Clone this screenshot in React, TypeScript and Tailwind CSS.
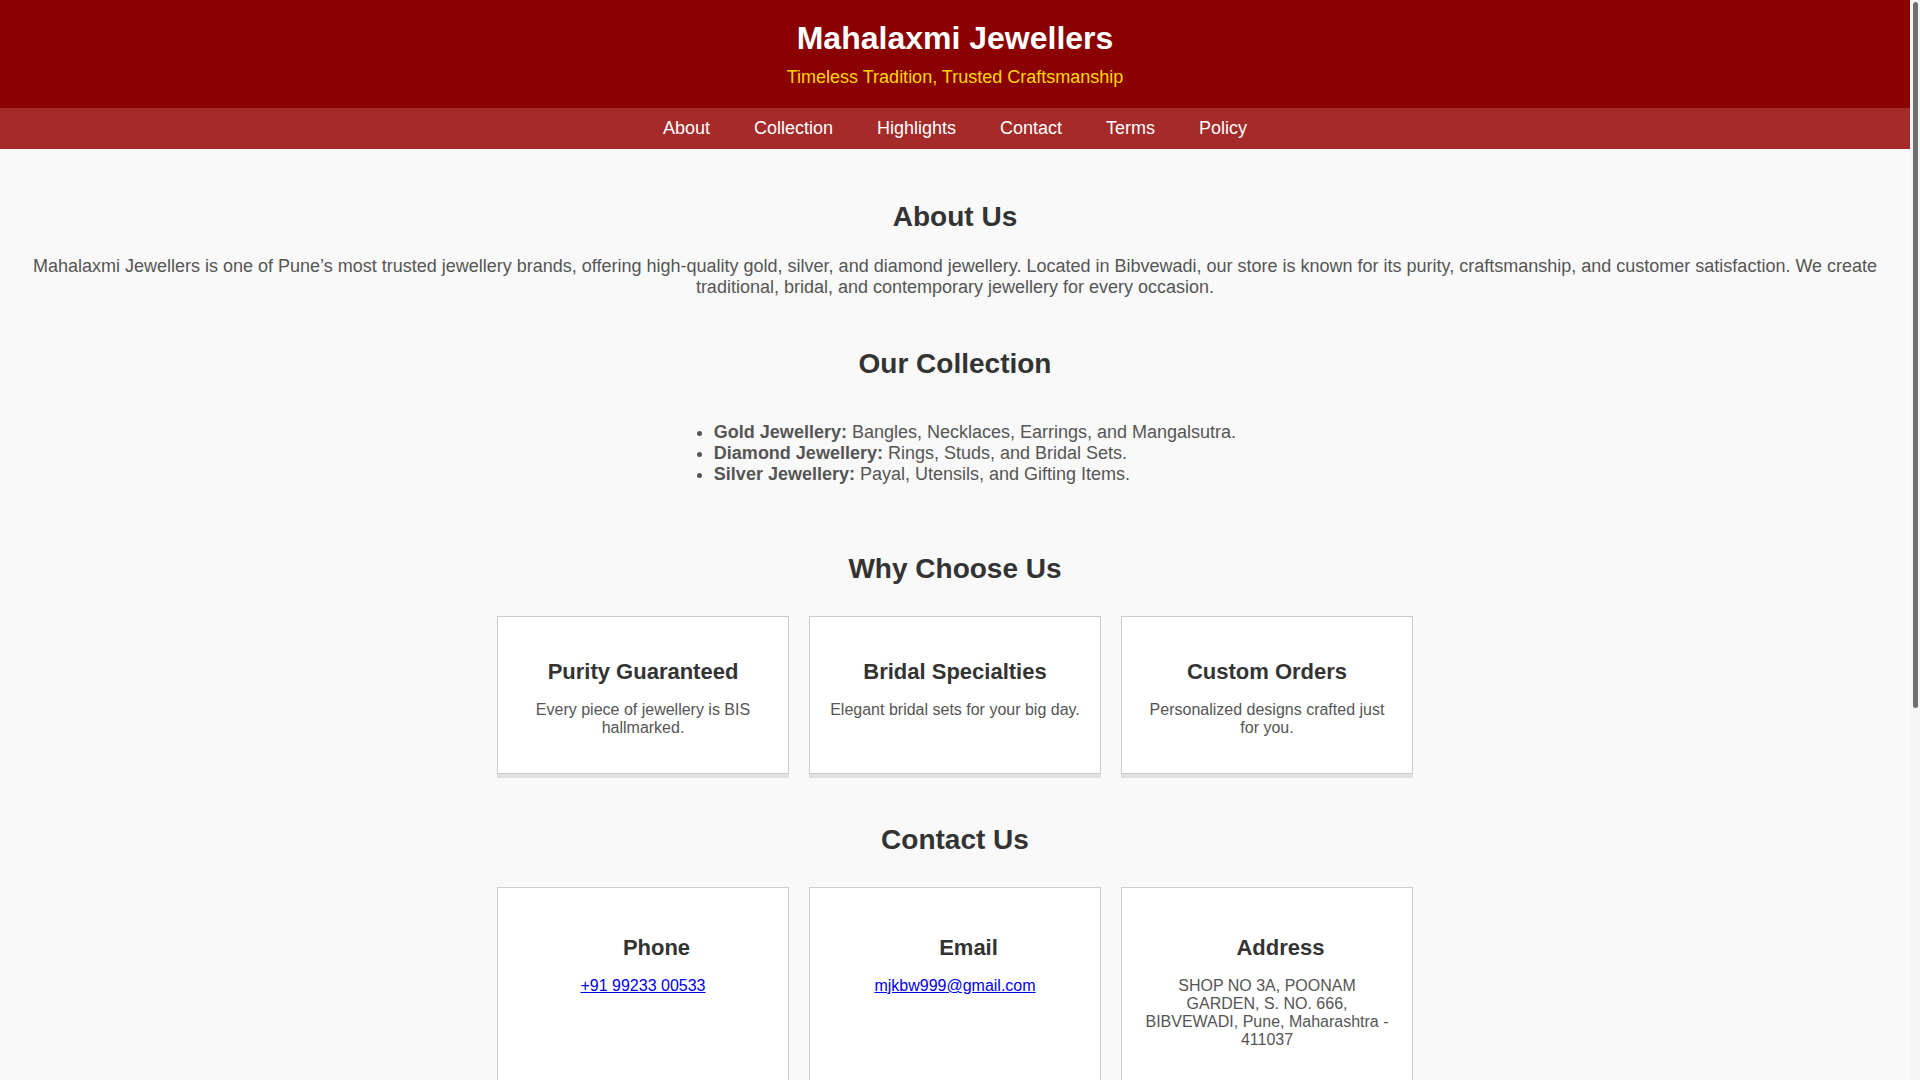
const navLinks = ["About", "Collection", "Highlights", "Contact", "Terms", "Policy"];

const highlights = [
  { title: "Purity Guaranteed", text: "Every piece of jewellery is BIS hallmarked." },
  { title: "Bridal Specialties", text: "Elegant bridal sets for your big day." },
  { title: "Custom Orders", text: "Personalized designs crafted just for you." },
];

function SectionTitle({ children }: { children: React.ReactNode }) {
  return <h2 className="text-[28px] font-bold leading-[normal] text-[#333]">{children}</h2>;
}

function Card({ children }: { children: React.ReactNode }) {
  return (
    <div className="w-[292px] bg-white border border-[#ccc] p-[20px] text-center shadow-[0_4px_0_#e0e0e0]">
      {children}
    </div>
  );
}

function ContactCard({ title, children }: { title: string; children: React.ReactNode }) {
  return (
    <Card>
      <h3 className="mt-[22px] mb-[16px] text-[22px] font-bold leading-[normal] text-[#333]">
        <span className="inline-block w-[22px] h-[25px] mr-[5px] align-baseline" />
        {title}
      </h3>
      <div className="mb-[16px] text-[16px] leading-[normal] text-[#555]">{children}</div>
    </Card>
  );
}

export default function App() {
  return (
    <div className="flex items-start bg-[#f9f9f9] font-['Liberation_Sans',Arial,sans-serif] text-[18px] leading-[normal] text-[#555]">
      <div className="flex-1 min-w-0">
        <header className="bg-[#8b0000] pt-[20px] pb-[20px] text-center">
          <h1 className="text-[32px] font-bold leading-[normal] text-white">Mahalaxmi Jewellers</h1>
          <p className="mt-[10px] text-[18px] leading-[normal] text-[#ffd700]">
            Timeless Tradition, Trusted Craftsmanship
          </p>
        </header>

        <nav className="bg-[#a52a2a] py-[10px] flex justify-center gap-[44px]">
          {navLinks.map((l) => (
            <a key={l} href={`#${l.toLowerCase()}`} className="text-white text-[18px] leading-[normal]">
              {l}
            </a>
          ))}
        </nav>

        <main className="px-[20px] text-center">
          <section id="about" className="pt-[52px]">
            <SectionTitle>About Us</SectionTitle>
            <p className="pt-[23px]">
              Mahalaxmi Jewellers is one of Pune’s most trusted jewellery brands, offering high-quality gold,
              silver, and diamond jewellery. Located in Bibvewadi, our store is known for its purity,
              craftsmanship, and customer satisfaction. We create traditional, bridal, and contemporary
              jewellery for every occasion.
            </p>
          </section>

          <section id="collection" className="pt-[50px]">
            <SectionTitle>Our Collection</SectionTitle>
            <div className="pt-[42px] pb-[18px]">
              <ul className="inline-block text-left list-disc pl-[40px] align-top">
                <li>
                  <strong>Gold Jewellery:</strong> Bangles, Necklaces, Earrings, and Mangalsutra.
                </li>
                <li>
                  <strong>Diamond Jewellery:</strong> Rings, Studs, and Bridal Sets.
                </li>
                <li>
                  <strong>Silver Jewellery:</strong> Payal, Utensils, and Gifting Items.
                </li>
              </ul>
            </div>
          </section>

          <section id="highlights" className="pt-[50px]">
            <SectionTitle>Why Choose Us</SectionTitle>
            <div className="pt-[31px] flex justify-center gap-[20px]">
              {highlights.map((h) => (
                <Card key={h.title}>
                  <h3 className="mt-[22px] mb-[16px] text-[22px] font-bold leading-[normal] text-[#333]">
                    {h.title}
                  </h3>
                  <p className="mb-[16px] text-[16px] leading-[normal] text-[#555]">{h.text}</p>
                </Card>
              ))}
            </div>
          </section>

          <section id="contact" className="pt-[50px]">
            <SectionTitle>Contact Us</SectionTitle>
            <div className="pt-[31px] flex justify-center gap-[20px]">
              <ContactCard title="Phone">
                <a href="tel:+919923300533" className="text-[#0000ee] underline">
                  +91 99233 00533
                </a>
              </ContactCard>
              <ContactCard title="Email">
                <a href="mailto:mjkbw999@gmail.com" className="text-[#0000ee] underline">
                  mjkbw999@gmail.com
                </a>
              </ContactCard>
              <ContactCard title="Address">
                SHOP NO 3A, POONAM GARDEN, S. NO. 666, BIBVEWADI, Pune, Maharashtra - 411037
              </ContactCard>
            </div>
          </section>

          <section id="terms" className="pt-[50px]">
            <SectionTitle>Terms &amp; Conditions</SectionTitle>
            <div className="pt-[42px] pb-[18px]">
              <ul className="inline-block text-left list-disc pl-[40px] align-top">
                <li>All jewellery is sold as per the prevailing gold and silver rates on the day of purchase.</li>
                <li>Making charges and GST are applicable as per government norms.</li>
                <li>Custom orders require an advance payment and cannot be cancelled once confirmed.</li>
                <li>Exchange is accepted only with the original bill.</li>
              </ul>
            </div>
          </section>

          <section id="policy" className="pt-[50px] pb-[50px]">
            <SectionTitle>Our Policy</SectionTitle>
            <div className="pt-[42px] pb-[18px]">
              <ul className="inline-block text-left list-disc pl-[40px] align-top">
                <li>Lifetime exchange on gold jewellery at the current market value.</li>
                <li>Free cleaning and polishing for jewellery purchased from our store.</li>
                <li>Customer details are kept private and never shared.</li>
              </ul>
            </div>
          </section>
        </main>

        <footer className="bg-[#8b0000] py-[20px] text-center text-white text-[16px] leading-[normal]">
          © 2025 Mahalaxmi Jewellers, Bibvewadi, Pune. All rights reserved.
        </footer>
      </div>

      {/* scrollbar gutter like the reference browser */}
      <div className="sticky top-0 h-screen w-[10px] shrink-0 bg-[#f5f5f5] flex justify-center pt-[2px]">
        <div className="w-[5px] h-[706px] rounded-full bg-[#6e6e6e]" />
      </div>
    </div>
  );
}
